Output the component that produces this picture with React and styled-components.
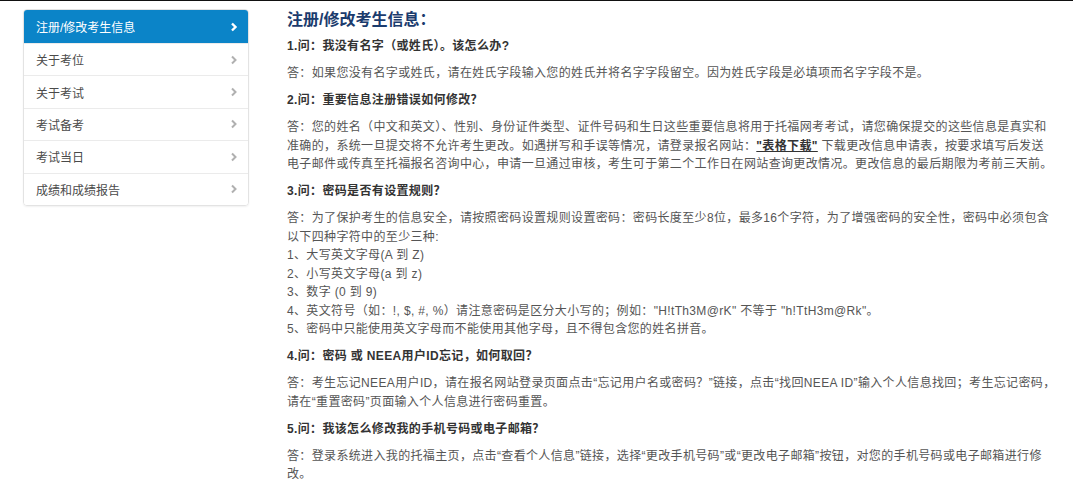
import React from 'react'
import styled, { createGlobalStyle } from 'styled-components'

const GlobalStyle = createGlobalStyle`
  html, body {
    margin: 0;
    padding: 0;
    background: #fff;
  }
  body {
    font-family: "Liberation Sans", "Noto Sans CJK SC", sans-serif;
    font-size: 12px;
    color: #555;
  }
`

const Page = styled.div`
  border-top: 1px solid #111;
  display: flex;
  align-items: flex-start;
  gap: 38px;
  padding: 8px 0 0 23px;
  width: 1073px;
  height: 488px;
  box-sizing: border-box;
  overflow: hidden;
`

const Sidebar = styled.ul`
  list-style: none;
  margin: 0;
  padding: 0;
  width: 226px;
  flex: none;
  border: 1px solid #e3e3e3;
  border-radius: 4px;
  box-shadow: 0 1px 2px rgba(0, 0, 0, 0.06);
  overflow: hidden;
  box-sizing: border-box;
`

const NavItem = styled.li`
  display: flex;
  align-items: center;
  justify-content: space-between;
  height: ${({ active }) => (active ? '33px' : '32.4px')};
  padding: 0 10px 0 12px;
  box-sizing: border-box;
  background: ${({ active }) => (active ? '#0b84c8' : '#fff')};
  color: ${({ active }) => (active ? '#fff' : '#4a4a4a')};
  border-top: ${({ first }) => (first ? 'none' : '1px solid #ebebeb')};
  font-size: 12px;
`

const Chevron = ({ active }) => (
  <svg width="8" height="10" viewBox="0 0 8 10">
    <polyline
      points="2,1.5 5.5,5 2,8.5"
      fill="none"
      stroke={active ? '#fff' : '#b0b0b0'}
      strokeWidth={active ? 2.4 : 2}
    />
  </svg>
)

const Content = styled.div`
  width: 790px;
  flex: none;
  letter-spacing: 0.35px;
`

const Title = styled.h2`
  margin: 0 0 6px;
  font-size: 16px;
  line-height: 22px;
  font-weight: bold;
  color: #1b3b6d;
  letter-spacing: 0;
`

const Question = styled.p`
  margin: 0 0 8.5px;
  line-height: 18.5px;
  font-weight: bold;
  color: #333;
`

const Answer = styled.p`
  margin: 0 0 8.5px;
  line-height: 18.5px;
  color: #555;
  white-space: nowrap;
`

const Link = styled.a`
  color: #333;
  font-weight: bold;
  text-decoration: underline;
`

const navItems = ['注册/修改考生信息', '关于考位', '关于考试', '考试备考', '考试当日', '成绩和成绩报告']

const App = () => (
  <>
    <GlobalStyle />
    <Page>
      <Sidebar>
        {navItems.map((label, i) => (
          <NavItem key={label} active={i === 0} first={i === 0}>
            <span>{label}</span>
            <Chevron active={i === 0} />
          </NavItem>
        ))}
      </Sidebar>
      <Content>
        <Title>注册/修改考生信息：</Title>
        <Question>1.问：我没有名字（或姓氏）。该怎么办?</Question>
        <Answer>答：如果您没有名字或姓氏，请在姓氏字段输入您的姓氏并将名字字段留空。因为姓氏字段是必填项而名字字段不是。</Answer>
        <Question>2.问：重要信息注册错误如何修改？</Question>
        <Answer>
          答：您的姓名（中文和英文）、性别、身份证件类型、证件号码和生日这些重要信息将用于托福网考考试，请您确保提交的这些信息是真实和<br />
          准确的，系统一旦提交将不允许考生更改。如遇拼写和手误等情况，请登录报名网站：<Link>"表格下载"</Link> 下载更改信息申请表，按要求填写后发送<br />
          电子邮件或传真至托福报名咨询中心，申请一旦通过审核，考生可于第二个工作日在网站查询更改情况。更改信息的最后期限为考前三天前。
        </Answer>
        <Question>3.问：密码是否有设置规则？</Question>
        <Answer>
          答：为了保护考生的信息安全，请按照密码设置规则设置密码：密码长度至少8位，最多16个字符，为了增强密码的安全性，密码中必须包含<br />
          以下四种字符中的至少三种:<br />
          1、大写英文字母(A 到 Z)<br />
          2、小写英文字母(a 到 z)<br />
          3、数字 (0 到 9)<br />
          4、英文符号（如：!, $, #, %）请注意密码是区分大小写的；例如："H!tTh3M@rK" 不等于 "h!TtH3m@Rk"。<br />
          5、密码中只能使用英文字母而不能使用其他字母，且不得包含您的姓名拼音。
        </Answer>
        <Question>4.问：密码 或 NEEA用户ID忘记，如何取回？</Question>
        <Answer>
          答：考生忘记NEEA用户ID，请在报名网站登录页面点击“忘记用户名或密码？”链接，点击“找回NEEA ID”输入个人信息找回；考生忘记密码，<br />
          请在“重置密码”页面输入个人信息进行密码重置。
        </Answer>
        <Question>5.问：我该怎么修改我的手机号码或电子邮箱？</Question>
        <Answer>
          答：登录系统进入我的托福主页，点击“查看个人信息”链接，选择“更改手机号码”或“更改电子邮箱”按钮，对您的手机号码或电子邮箱进行修<br />
          改。
        </Answer>
      </Content>
    </Page>
  </>
)

export default App
